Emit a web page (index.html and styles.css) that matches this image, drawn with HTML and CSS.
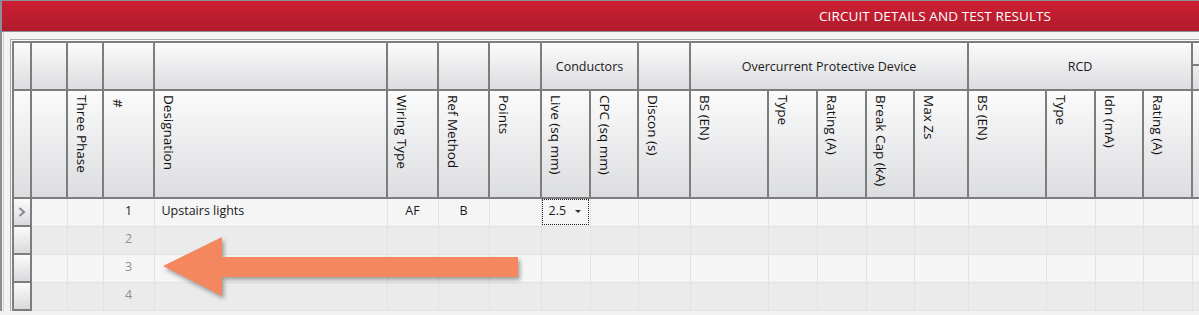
FILE: index.html
```html
<!DOCTYPE html>
<html lang="en">
    <head>
        <meta charset="UTF-8" />
        <title>Circuit Details and Test Results</title>
        <link rel="stylesheet" href="styles.css">
    </head>
    <body>
        <div class="window">
        <div class="title-bar">
            <span class="title">CIRCUIT DETAILS AND TEST RESULTS</span>
        </div>
        <div class="panel">
            <div class="grid">
            <table class="circuit-table">
                <colgroup>
                <col style="width:18px"><col style="width:36px"><col style="width:36px"><col style="width:51px">
                <col style="width:233px"><col style="width:51px"><col style="width:51px"><col style="width:52px">
                <col style="width:49px"><col style="width:48px"><col style="width:52px"><col style="width:78px">
                <col style="width:49px"><col style="width:49px"><col style="width:48px"><col style="width:54px">
                <col style="width:78px"><col style="width:49px"><col style="width:48px"><col style="width:49px">
                <col style="width:10px">
                </colgroup>
                <thead>
                <tr class="group-row">
                    <th></th><th></th><th></th><th></th><th></th><th></th><th></th><th></th>
                    <th colspan="2">Conductors</th>
                    <th></th>
                    <th colspan="5">Overcurrent Protective Device</th>
                    <th colspan="4">RCD</th>
                    <th class="split"><div class="split-top"></div></th>
                </tr>
                <tr class="name-row">
                    <th></th>
                    <th></th>
                    <th><span class="vtext">Three Phase</span></th>
                    <th><span class="vtext">#</span></th>
                    <th><span class="vtext">Designation</span></th>
                    <th><span class="vtext">Wiring Type</span></th>
                    <th><span class="vtext">Ref Method</span></th>
                    <th><span class="vtext">Points</span></th>
                    <th><span class="vtext">Live (sq mm)</span></th>
                    <th><span class="vtext">CPC (sq mm)</span></th>
                    <th><span class="vtext">Discon (s)</span></th>
                    <th><span class="vtext">BS (EN)</span></th>
                    <th><span class="vtext">Type</span></th>
                    <th><span class="vtext">Rating (A)</span></th>
                    <th><span class="vtext">Break Cap (kA)</span></th>
                    <th><span class="vtext">Max Zs</span></th>
                    <th><span class="vtext">BS (EN)</span></th>
                    <th><span class="vtext">Type</span></th>
                    <th><span class="vtext">Idn (mA)</span></th>
                    <th><span class="vtext">Rating (A)</span></th>
                    <th></th>
                </tr>
                </thead>
                <tbody>
                <tr>
                    <th class="row-head">
                    <svg class="chevron" width="8" height="10" viewBox="0 0 8 10"><polyline points="1.5,1 6,5 1.5,9" /></svg>
                    </th>
                    <td></td><td></td>
                    <td class="num">1</td>
                    <td>Upstairs lights</td>
                    <td class="center">AF</td>
                    <td class="center">B</td>
                    <td></td>
                    <td class="combo">2.5 <span class="caret"></span></td>
                    <td></td><td></td><td></td><td></td><td></td><td></td><td></td>
                    <td></td><td></td><td></td><td></td><td></td>
                </tr>
                <tr>
                    <th class="row-head"></th>
                    <td></td><td></td>
                    <td class="num muted">2</td>
                    <td></td><td></td><td></td><td></td><td></td><td></td><td></td><td></td>
                    <td></td><td></td><td></td><td></td><td></td><td></td><td></td><td></td><td></td>
                </tr>
                <tr>
                    <th class="row-head"></th>
                    <td></td><td></td>
                    <td class="num muted">3</td>
                    <td></td><td></td><td></td><td></td><td></td><td></td><td></td><td></td>
                    <td></td><td></td><td></td><td></td><td></td><td></td><td></td><td></td><td></td>
                </tr>
                <tr>
                    <th class="row-head"></th>
                    <td></td><td></td>
                    <td class="num muted">4</td>
                    <td></td><td></td><td></td><td></td><td></td><td></td><td></td><td></td>
                    <td></td><td></td><td></td><td></td><td></td><td></td><td></td><td></td><td></td>
                </tr>
                </tbody>
            </table>
            </div>
        </div>
        </div>

        <svg class="callout-arrow" width="1199" height="315" viewBox="0 0 1199 315">
            <polygon points="163,266 222,237 222,257 518,257 518,277 222,277 222,296" />
        </svg>
    </body>
</html>
```

FILE: styles.css
```css
* {
    box-sizing: border-box;
}
body {
    margin: 0;
    width: 1199px;
    height: 315px;
    overflow: hidden;
    background: #f2f2f2;
    font-family: "Open Sans", "Noto Sans", sans-serif;
    color: #1a1a1a;
    position: relative;
}
.window {
    border-top: 1px solid #8c9096;
    border-left: 2px solid #8c9096;
    overflow: hidden;
}
.title-bar {
    height: 31px;
    background: linear-gradient(#ce1e33, #b01c2d);
    border-bottom: 1px solid #8c9096;
    display: flex;
    align-items: center;
    padding-left: 817px;
}
.title {
    color: #fff;
    font-size: 13.5px;
    letter-spacing: 0.1px;
}
.panel {
    margin-left: 1px;
    border-left: 1px solid #d2d2d2;
    padding: 7px 0 0 6px;
    background: #f3f3f3;
}
.grid {
    border-top: 1px solid #a9a9a9;
    border-left: 1px solid #a9a9a9;
    padding: 1px 0 0 1px;
    background: #fafafa;
}
.circuit-table {
    border-collapse: collapse;
    table-layout: fixed;
    width: 1189px;
    font-size: 12.5px;
}
.circuit-table th {
    border: 2px solid #7d7d7d;
    background: linear-gradient(#fbfbfb, #dcdde0);
    font-weight: normal;
    padding: 0;
}
.group-row th {
    height: 48px;
    text-align: center;
    vertical-align: middle;
}
.name-row th {
    height: 108px;
    text-align: left;
    vertical-align: top;
    padding: 4px 0 0 6px;
}
.vtext {
    display: inline-block;
    writing-mode: vertical-rl;
    font-size: 13.5px;
    line-height: 15px;
    white-space: nowrap;
    color: #111;
}
.split {
    vertical-align: top !important;
}
.split-top {
    height: 23px;
    border-bottom: 2px solid #7d7d7d;
}
.circuit-table td {
    height: 28px;
    border: 1px solid #e2e2e2;
    padding: 0 7px 3px;
    white-space: nowrap;
    overflow: hidden;
}
.circuit-table tbody tr:nth-child(odd) td {
    background: #f5f5f5;
}
.circuit-table tbody tr:nth-child(even) td {
    background: #ebebeb;
}
.circuit-table .row-head {
    height: 28px;
    background: linear-gradient(#fbfbfb, #d9dadd);
    text-align: center;
    vertical-align: middle;
}
.chevron {
    display: block;
    margin: 0 auto;
}
.chevron polyline {
    fill: none;
    stroke: #858a90;
    stroke-width: 2;
}
.num {
    text-align: center;
}
.muted {
    color: #8f8f8f;
}
.center {
    text-align: center;
}
.combo {
    outline: 1px dotted #222;
    outline-offset: -2px;
}
.caret {
    display: inline-block;
    margin-left: 6px;
    border-left: 3px solid transparent;
    border-right: 3px solid transparent;
    border-top: 3px solid #333;
    vertical-align: middle;
}
.callout-arrow {
    position: absolute;
    left: 0;
    top: 0;
    pointer-events: none;
}
.callout-arrow polygon {
    fill: #f5875f;
    filter: drop-shadow(2px 3px 2px rgba(0, 0, 0, 0.35));
}
```
